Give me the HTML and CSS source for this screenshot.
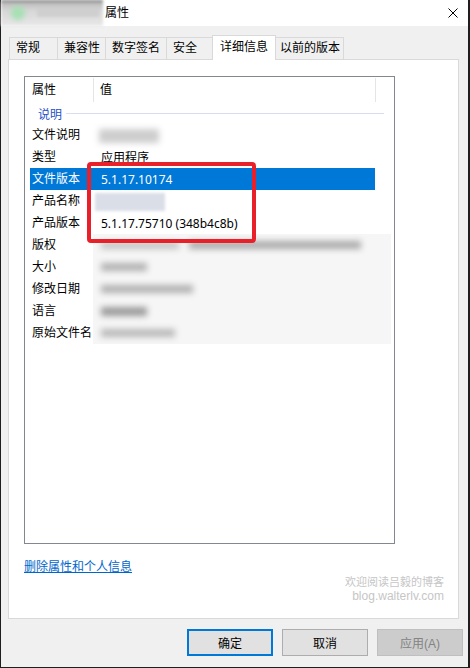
FILE: index.html
```html
<!DOCTYPE html>
<html lang="zh-CN">
<head>
    <meta charset="UTF-8">
    <title>属性</title>
    <link rel="stylesheet" href="styles.css">
</head>
<body>
    <div class="window">
        <div class="titlebar">
            <div class="title-app"><span class="app-dot"></span><span class="app-name"></span></div>
            <span class="title">属性</span>
            <svg class="close" width="10" height="10" viewBox="0 0 10 10">
                <path d="M0.5 0.5 L9.5 9.5 M9.5 0.5 L0.5 9.5" stroke="#000" stroke-width="1" fill="none"/>
            </svg>
        </div>

        <div class="content">
            <div class="tabs">
                <div class="tab t-general">常规</div>
                <div class="tab t-compat">兼容性</div>
                <div class="tab t-sign">数字签名</div>
                <div class="tab t-safe">安全</div>
                <div class="tab active">详细信息</div>
                <div class="tab t-prev">以前的版本</div>
            </div>

            <div class="panel">
                <div class="listbox">
                    <div class="list-head">
                        <div class="head-name">属性</div>
                        <div class="head-value">值</div>
                    </div>
                    <div class="group"><span>说明</span><i class="group-line"></i></div>

                    <div class="row"><span class="key">文件说明</span><span class="val"><i class="blur b-desc"></i></span></div>
                    <div class="row"><span class="key">类型</span><span class="val">应用程序</span></div>
                    <div class="row selected"><span class="key">文件版本</span><span class="val">5.1.17.10174</span></div>
                    <div class="row"><span class="key">产品名称</span><span class="val"><i class="blur b-name"></i></span></div>
                    <div class="row"><span class="key">产品版本</span><span class="val">5.1.17.75710 (348b4c8b)</span></div>
                    <div class="row"><span class="key">版权</span><span class="val"></span></div>
                    <div class="row"><span class="key">大小</span><span class="val"></span></div>
                    <div class="row"><span class="key">修改日期</span><span class="val"></span></div>
                    <div class="row"><span class="key">语言</span><span class="val"></span></div>
                    <div class="row"><span class="key">原始文件名</span><span class="val"></span></div>

                    <!-- 打码区域 -->
                    <div class="redact">
                        <div class="redact-line"><i class="blur b-copy1"></i><i class="blur b-copy2"></i></div>
                        <div class="redact-line"><i class="blur b-size"></i></div>
                        <div class="redact-line"><i class="blur b-date"></i></div>
                        <div class="redact-line"><i class="blur b-lang"></i></div>
                        <div class="redact-line"><i class="blur b-file"></i></div>
                    </div>

                    <!-- 红框标注 -->
                    <div class="mark"></div>
                </div>

                <a class="link" href="#">删除属性和个人信息</a>

                <div class="watermark">
                    <div class="wm-cn">欢迎阅读吕毅的博客</div>
                    <div class="wm-en">blog.walterlv.com</div>
                </div>
            </div>

            <div class="buttons">
                <button class="btn default">确定</button>
                <button class="btn">取消</button>
                <button class="btn" disabled>应用(A)</button>
            </div>
        </div>
    </div>
</body>
</html>
```

FILE: styles.css
```css
body {
    margin: 0;
    width: 470px;
    height: 668px;
    background-color: #1e1e1e;
    font-family: "Liberation Sans", "Noto Sans CJK SC", sans-serif;
    font-size: 12px;
    color: #000;
    overflow: hidden;
}

.window {
    margin-left: 1px;
    width: 467px;
    height: 667px;
    background-color: #f0f0f0;
}

/* 标题栏 */
.titlebar {
    display: flex;
    align-items: center;
    height: 26px;
    background-color: #fff;
}

.title-app {
    display: flex;
    align-items: center;
    width: 102px;
    height: 26px;
    background: linear-gradient(180deg, #6a6a6a 0px, #bcbcbc 3px, #d6d6d6 10px, #e8e8e8 26px);
    filter: blur(1.5px);
}

.app-dot {
    width: 14px;
    height: 14px;
    margin-left: 10px;
    border-radius: 50%;
    background-color: #a6e0b2;
    filter: blur(2px);
}

.app-name {
    width: 62px;
    height: 8px;
    margin-left: 12px;
    background-color: #cfcfcf;
}

.title {
    margin-left: 2px;
    line-height: 26px;
    flex: 1;
}

.close {
    margin-right: 10px;
}

/* 选项卡 */
.content {
    padding: 9px 0 0 7px;
}

.tabs {
    display: flex;
    align-items: flex-end;
    height: 24px;
    padding-left: 1px;
}

.tab {
    box-sizing: border-box;
    height: 22px;
    padding-left: 6px;
    border: 1px solid #d9d9d9;
    border-bottom: none;
    line-height: 20px;
    background-color: #f0f0f0;
    white-space: nowrap;
}

.tab + .tab { margin-left: -1px; }

.t-general { width: 49px; }
.t-compat { width: 49px; }
.t-sign { width: 62px; }
.t-safe { width: 49px; }
.t-prev { width: 71px; }

.tab.active {
    position: relative;
    z-index: 1;
    width: 64px;
    height: 25px;
    margin-left: -3px;
    margin-right: -2px;
    margin-bottom: -1px;
    padding: 1px 0 0 7px;
    background-color: #fff;
}

.panel {
    box-sizing: border-box;
    width: 451px;
    height: 560px;
    padding: 16px 14px 0 15px;
    background-color: #fff;
    border: 1px solid #d9d9d9;
}

/* 详细信息列表 */
.listbox {
    position: relative;
    box-sizing: border-box;
    width: 371px;
    height: 468px;
    border: 1px solid #828790;
    background-color: #fff;
}

.list-head {
    display: flex;
    height: 25px;
}

.head-name,
.head-value {
    box-sizing: border-box;
    height: 24px;
    margin-top: 1px;
    line-height: 24px;
    border-right: 1px solid #e5e5e5;
}

.head-name {
    width: 69px;
    padding-left: 7px;
}

.head-value {
    width: 282px;
    padding-left: 6px;
}

.group {
    display: flex;
    align-items: center;
    height: 22px;
    padding: 0 10px 0 13px;
    color: #1e4fc8;
}

.group-line {
    flex: 1;
    height: 1px;
    margin-left: 4px;
    background-color: #d8def0;
}

.row {
    display: grid;
    grid-template-columns: 71px 1fr;
    box-sizing: border-box;
    width: 345px;
    height: 22px;
    margin-left: 5px;
    padding-top: 1px;
    line-height: 21px;
    white-space: nowrap;
}

.row .key { padding-left: 2px; }

.row.selected {
    background-color: #0078d7;
    color: #fff;
}

.val {
    display: flex;
    align-items: center;
    font-family: "Noto Sans", "Noto Sans CJK SC", sans-serif;
}

.blur {
    display: inline-block;
    height: 10px;
    background-color: #b5b5b5;
    filter: blur(3px);
}

.b-desc { width: 60px; margin-left: -2px; background-color: #cdcdcd; height: 14px; }
.b-name { width: 70px; margin-left: -6px; background-color: #dadee7; height: 18px; filter: blur(1.5px); }

.redact {
    position: absolute;
    left: 68px;
    top: 157px;
    box-sizing: border-box;
    width: 298px;
    height: 110px;
    padding-left: 8px;
    background-color: #f6f6f6;
}

.redact-line {
    display: flex;
    align-items: center;
    height: 22px;
}

.b-copy1 { width: 78px; height: 7px; background-color: #c2c2c2; }
.b-copy2 { width: 172px; height: 8px; margin-left: 10px; background-color: #aaa; }
.b-size { width: 46px; height: 8px; background-color: #b0b0b0; }
.b-date { width: 92px; height: 8px; background-color: #b0b0b0; }
.b-lang { width: 46px; height: 9px; background-color: #9a9a9a; }
.b-file { width: 74px; height: 8px; background-color: #b8b8b8; }

.mark {
    position: absolute;
    left: 62px;
    top: 85px;
    box-sizing: border-box;
    width: 169px;
    height: 81px;
    border: 4px solid #e8202a;
    border-radius: 4px;
}

/* 链接与水印 */
.link {
    display: inline-block;
    margin-top: 15px;
    line-height: 16px;
    color: #0066cc;
}

.watermark {
    text-align: right;
    color: #c6c6c6;
    line-height: 14px;
}

.wm-cn { font-size: 11px; }
.wm-en { font-size: 12px; }

/* 按钮 */
.buttons {
    display: flex;
    justify-content: flex-end;
    gap: 9px;
    margin-top: 10px;
    padding-right: 5px;
}

.btn {
    box-sizing: border-box;
    width: 86px;
    height: 27px;
    padding: 0;
    font-family: "Liberation Sans", "Noto Sans CJK SC", sans-serif;
    font-size: 12px;
    color: #000;
    background-color: #e1e1e1;
    border: 1px solid #adadad;
}

.btn.default {
    border: 2px solid #0078d7;
}

.btn:disabled {
    color: #838383;
    background-color: #cccccc;
    border-color: #bfbfbf;
}
```
